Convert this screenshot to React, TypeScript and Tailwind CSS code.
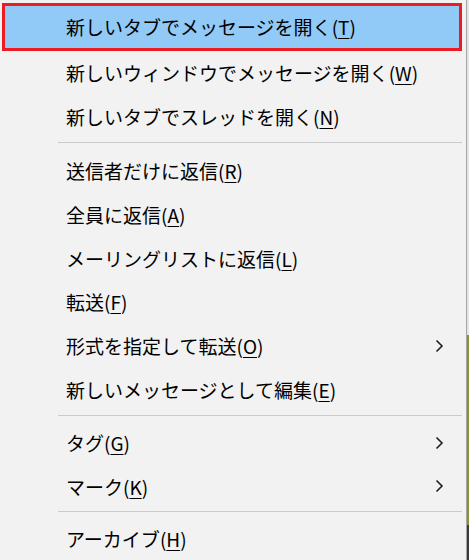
import React from "react";

type Item = { label: string; key: string; sub?: boolean };

const group1: Item[] = [
  { label: "新しいウィンドウでメッセージを開く", key: "W" },
  { label: "新しいタブでスレッドを開く", key: "N" },
];

const group2: Item[] = [
  { label: "送信者だけに返信", key: "R" },
  { label: "全員に返信", key: "A" },
  { label: "メーリングリストに返信", key: "L" },
  { label: "転送", key: "F" },
  { label: "形式を指定して転送", key: "O", sub: true },
  { label: "新しいメッセージとして編集", key: "E" },
];

const group3: Item[] = [
  { label: "タグ", key: "G", sub: true },
  { label: "マーク", key: "K", sub: true },
];

const Chevron = () => (
  <svg width="9" height="14" viewBox="0 0 9 14" className="mr-[20px]">
    <path d="M1.5 1.5 L7 7 L1.5 12.5" fill="none" stroke="#1e1e1e" strokeWidth="1.6" />
  </svg>
);

const Label = ({ label, k }: { label: string; k: string }) => (
  <span>
    {label}(<span className="underline underline-offset-[3px] decoration-1">{k}</span>)
  </span>
);

const Row = ({ item }: { item: Item }) => (
  <div className="mx-[2px] h-[44px] pl-[64px] flex items-center justify-between">
    <Label label={item.label} k={item.key} />
    {item.sub && <Chevron />}
  </div>
);

const Sep = ({ h, top }: { h: string; top: string }) => (
  <div className={`${h} ${top} pl-[58px] pr-[4px] flex flex-col`}>
    <div className="h-px bg-[#cbcbcb]" />
  </div>
);

export default function App() {
  return (
    <div className="w-[469px] h-[560px] flex overflow-hidden bg-[#f2f2f2]">
      <div
        className="w-[466px] h-full pt-[3px] flex flex-col text-[19px] text-black leading-none"
        style={{ fontFamily: '"Noto Sans CJK JP", "Noto Sans", sans-serif' }}
      >
        <div className="mx-[2px] mr-[4px] h-[48px] pl-[61px] flex items-center bg-[#91c9f7] border-[3px] border-[#ec1c24]">
          <Label label="新しいタブでメッセージを開く" k="T" />
        </div>
        {group1.map((it) => (
          <Row key={it.key} item={it} />
        ))}
        <div className="h-[11px] pt-[4px] pl-[58px] pr-[4px]">
          <div className="h-px bg-[#cbcbcb]" />
        </div>
        {group2.map((it) => (
          <Row key={it.key} item={it} />
        ))}
        <div className="h-[10px] pt-[4px] pl-[58px] pr-[4px]">
          <div className="h-px bg-[#cbcbcb]" />
        </div>
        {group3.map((it) => (
          <Row key={it.key} item={it} />
        ))}
        <div className="h-[8px] pt-[3px] pl-[58px] pr-[4px]">
          <div className="h-px bg-[#cbcbcb]" />
        </div>
        <Row item={{ label: "アーカイブ", key: "H" }} />
      </div>
      <div className="w-px h-full bg-[#a7a7a7]" />
      <div className="flex-1 flex flex-col">
        <div className="h-[335px] bg-[#e4e4e4]" />
        <div className="h-[190px] bg-[#8c9132]" />
        <div className="flex-1 bg-[#3a3a3a]" />
      </div>
    </div>
  );
}
